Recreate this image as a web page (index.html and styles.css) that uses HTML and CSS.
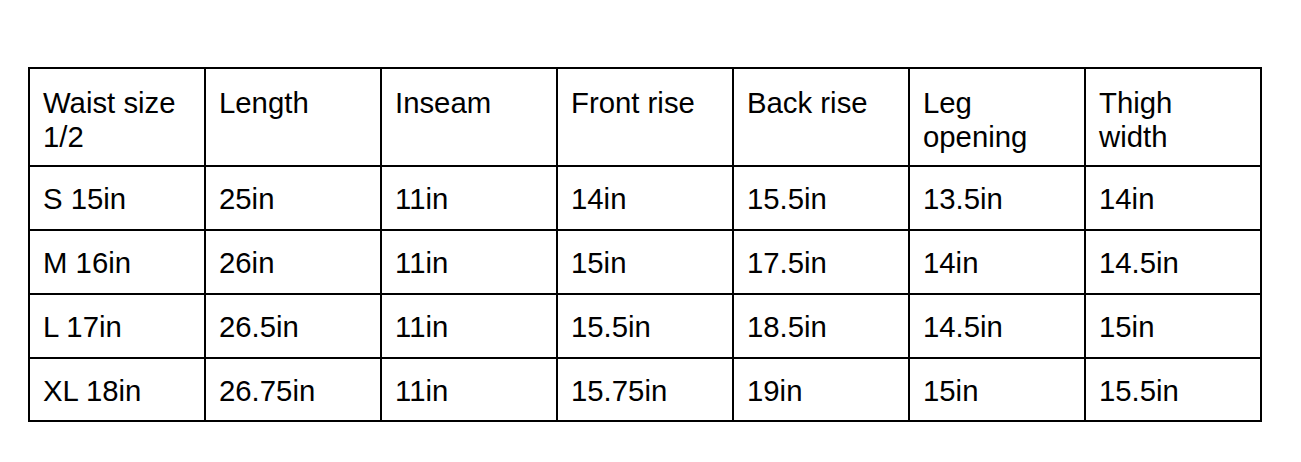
FILE: index.html
```html
<!DOCTYPE html>
<html>
<head>
<meta charset="utf-8">
<link rel="stylesheet" href="styles.css">
</head>
<body>
<table class="size-table">
  <colgroup>
    <col class="col"><col class="col"><col class="col"><col class="col"><col class="col"><col class="col"><col class="col">
  </colgroup>
  <tr class="head">
    <td>Waist size 1/2</td><td>Length</td><td>Inseam</td><td>Front rise</td><td>Back rise</td><td>Leg opening</td><td>Thigh width</td>
  </tr>
  <tr>
    <td>S 15in</td><td>25in</td><td>11in</td><td>14in</td><td>15.5in</td><td>13.5in</td><td>14in</td>
  </tr>
  <tr>
    <td>M 16in</td><td>26in</td><td>11in</td><td>15in</td><td>17.5in</td><td>14in</td><td>14.5in</td>
  </tr>
  <tr>
    <td>L 17in</td><td>26.5in</td><td>11in</td><td>15.5in</td><td>18.5in</td><td>14.5in</td><td>15in</td>
  </tr>
  <tr>
    <td>XL 18in</td><td>26.75in</td><td>11in</td><td>15.75in</td><td>19in</td><td>15in</td><td>15.5in</td>
  </tr>
</table>
</body>
</html>
```
FILE: styles.css
```css
html, body {
  margin: 0;
  padding: 0;
  background: #ffffff;
}
body {
  padding: 67px 0 0 28px;
}
.size-table {
  border-collapse: collapse;
  table-layout: fixed;
  width: 1234px;
  font-family: "Liberation Sans", Arial, sans-serif;
  font-size: 29.33px;
  line-height: 33.7px;
  color: #000000;
}
.col {
  width: 176px;
}
.size-table td {
  border: 2px solid #000000;
  padding: 15px 13px 13px 13px;
  vertical-align: top;
  text-align: left;
}
.head td {
  padding-top: 17px;
  padding-bottom: 12px;
}
```
